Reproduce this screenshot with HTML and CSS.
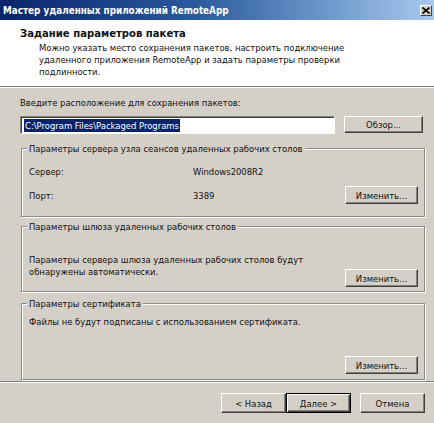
FILE: index.html
```html
<!DOCTYPE html>
<html lang="ru">
<head>
<meta charset="utf-8">
<title>Мастер удаленных приложений RemoteApp</title>
<link rel="stylesheet" href="styles.css">
</head>
<body>
<div class="window">
  <div class="titlebar">
    <span class="title">Мастер удаленных приложений RemoteApp</span>
    <span class="close"><svg width="8" height="7" viewBox="0 0 8 7"><path d="M0.5 0.5 L7.5 6.5 M7.5 0.5 L0.5 6.5" stroke="#000" stroke-width="1.6"/></svg></span>
  </div>
  <div class="header">
    <div class="h-title">Задание параметров пакета</div>
    <div class="h-desc">Можно указать место сохранения пакетов, настроить подключение<br>удаленного приложения RemoteApp и задать параметры проверки<br>подлинности.</div>
  </div>
  <div class="sep"></div>
  <div class="content">
    <div class="label">Введите расположение для сохранения пакетов:</div>
    <div class="path-row">
      <div class="input"><span class="sel">C:\Program Files\Packaged Programs</span></div>
      <div class="btn btn-browse">Обзор...</div>
    </div>
    <div class="group g1">
      <div class="legend">Параметры сервера узла сеансов удаленных рабочих столов</div>
      <div class="kv first"><span class="k">Сервер:</span><span class="v">Windows2008R2</span></div>
      <div class="kv"><span class="k">Порт:</span><span class="v">3389</span><span class="btn btn-change">Изменить...</span></div>
    </div>
    <div class="group g2">
      <div class="legend">Параметры шлюза удаленных рабочих столов</div>
      <div class="g2-row">
        <div class="txt">Параметры сервера шлюза удаленных рабочих столов будут<br>обнаружены автоматически.</div>
        <span class="btn btn-change">Изменить...</span>
      </div>
    </div>
    <div class="group g3">
      <div class="legend">Параметры сертификата</div>
      <div class="txt">Файлы не будут подписаны с использованием сертификата.</div>
      <div class="g3-btn"><span class="btn btn-change">Изменить...</span></div>
    </div>
  </div>
  <div class="sep sep-bottom"></div>
  <div class="footer">
    <span class="btn btn-nav">&lt; Назад</span>
    <span class="btn btn-nav default">Далее &gt;</span>
    <span class="btn btn-nav cancel">Отмена</span>
  </div>
</div>
</body>
</html>
```

FILE: styles.css
```css
html, body {
  margin: 0;
  padding: 0;
}
body {
  width: 434px;
  height: 423px;
  overflow: hidden;
  background: #d4d0c8;
  font-family: "DejaVu Sans Condensed", "DejaVu Sans", sans-serif;
  font-stretch: condensed;
  font-size: 9.4px;
  color: #111;
}
.window {
  display: flex;
  flex-direction: column;
  height: 423px;
}
.titlebar {
  height: 20px;
  background: linear-gradient(to right, #0a246a 0%, #2a5a9e 45%, #a6caf0 100%);
  display: flex;
  align-items: center;
  justify-content: space-between;
  padding: 0 2px 0 3px;
}
.title {
  color: #fff;
  font-weight: bold;
  font-size: 9.8px;
}
.close {
  width: 10px;
  height: 9px;
  background: #d4d0c8;
  border: 1px solid;
  border-color: #fff #404040 #404040 #fff;
  display: flex;
  align-items: center;
  justify-content: center;
  margin-top: 1px;
}
.header {
  background: #fff;
  height: 66px;
  box-sizing: border-box;
  padding: 7px 0 0 20px;
}
.h-title {
  font-weight: bold;
  line-height: 14px;
  font-size: 11.2px;
}
.h-desc {
  margin-left: 19px;
  line-height: 12px;
  margin-top: 1px;
}
.sep {
  height: 0;
  border-top: 1px solid #808080;
  border-bottom: 1px solid #fff;
}
.content {
  padding: 8px 9px 0 20px;
  height: 293px;
  box-sizing: border-box;
}
.label {
  line-height: 13px;
}
.path-row {
  display: flex;
  justify-content: space-between;
  margin-top: 7px;
  padding-right: 2px;
}
.input {
  width: 315px;
  height: 18px;
  box-sizing: border-box;
  background: #fff;
  border: 1px solid;
  border-color: #808080 #fff #fff #808080;
  box-shadow: inset 1px 1px 0 #404040;
  padding: 2px 0 0 3px;
}
.sel {
  display: inline-block;
  background: #0a246a;
  color: #fff;
  line-height: 13px;
  padding: 0 1px;
}
.btn {
  display: inline-flex;
  align-items: center;
  justify-content: center;
  box-sizing: border-box;
  background: #d4d0c8;
  border: 1px solid;
  border-color: #fff #404040 #404040 #fff;
  box-shadow: inset -1px -1px 0 #808080;
  color: #111;
}
.btn-browse {
  width: 79px;
  height: 17px;
}
.btn-change {
  width: 73px;
  height: 18px;
}
.group {
  margin-left: 1px;
  border: 1px solid #8c8c8c;
  box-shadow: inset 1px 1px 0 #fff, 1px 1px 0 #fff;
  padding: 0 6px 0 7px;
}
.legend {
  display: inline-block;
  margin: -7px 0 0 -2px;
  padding: 0 2px;
  line-height: 13px;
  background: #d4d0c8;
  vertical-align: top;
}
.g1 {
  margin-top: 14px;
  padding-bottom: 12px;
}
.kv {
  display: flex;
  align-items: center;
  height: 18px;
  margin-top: 8px;
}
.kv.first {
  margin-top: 4px;
  height: 14px;
}
.k {
  width: 164px;
}
.v {
  flex: 1;
}
.g2 {
  margin-top: 9px;
  padding-bottom: 4px;
}
.g2-row {
  display: flex;
  justify-content: space-between;
  align-items: flex-start;
  margin-top: 16px;
}
.g2-row .btn {
  margin-top: 15px;
}
.txt {
  line-height: 12px;
}
.g3 {
  margin-top: 11px;
  padding-bottom: 5px;
}
.g3 .txt {
  margin-top: 1px;
}
.g3-btn {
  display: flex;
  justify-content: flex-end;
  margin-top: 28px;
}
.sep-bottom {
  margin-top: 0;
}
.footer {
  display: flex;
  justify-content: flex-end;
  padding: 10px 9px 0 0;
}
.btn-nav {
  width: 65px;
  height: 20px;
}
.btn-nav.default {
  border: 1px solid #000;
  box-shadow: inset 1px 1px 0 #fff, inset -1px -1px 0 #404040, inset -2px -2px 0 #808080;
}
.btn-nav.cancel {
  margin-left: 9px;
}
```
